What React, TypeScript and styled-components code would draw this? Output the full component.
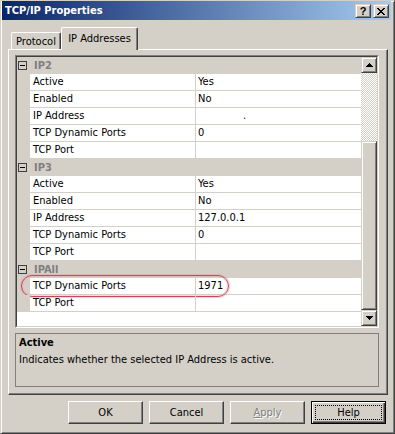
import React from "react";
import styled, { createGlobalStyle, css } from "styled-components";

const Global = createGlobalStyle`
  html, body { margin: 0; padding: 0; background: #D4D0C8; }
  body {
    font-family: "DejaVu Sans Condensed", "Liberation Sans", Arial, sans-serif;
    font-size: 11px;
    color: #000;
  }
  * { box-sizing: border-box; }
`;

const raised = css`
  background: #D4D0C8;
  border: 1px solid;
  border-color: #D4D0C8 #404040 #404040 #D4D0C8;
  box-shadow: inset 1px 1px #fff, inset -1px -1px #808080;
`;

const Window = styled.div`
  width: 395px;
  height: 434px;
  display: flex;
  flex-direction: column;
  background: #D4D0C8;
  border: 1px solid;
  border-color: #D4D0C8 #404040 #404040 #D4D0C8;
  box-shadow: inset 1px 1px #fff, inset -1px -1px #808080;
  padding: 0 3px 3px 1px;
  overflow: hidden;
`;

const TitleBar = styled.div`
  height: 19px;
  display: flex;
  align-items: center;
  justify-content: space-between;
  padding: 0 2px 0 3px;
  background: linear-gradient(to right, #0A246A, #A6CAF0);
  color: #fff;
  font-weight: bold;
  font-size: 11px;
`;

const CaptionButtons = styled.div`
  display: flex;
  gap: 2px;
  padding-top: 1px;
`;

const CaptionButton = styled.div`
  ${raised};
  width: 16px;
  height: 14px;
  display: flex;
  align-items: center;
  justify-content: center;
  color: #000;
  font-family: "Liberation Sans", Arial, sans-serif;
  font-weight: bold;
  font-size: 11px;
  line-height: 12px;
`;

const TabStrip = styled.div`
  margin: 7px 0 0 9px;
  height: 22px;
  display: flex;
  align-items: flex-end;
`;

const Tab = styled.div<{ $active?: boolean }>`
  position: relative;
  z-index: 1;
  display: flex;
  align-items: center;
  justify-content: center;
  background: #D4D0C8;
  border-top: 1px solid #fff;
  border-left: 1px solid #fff;
  border-right: 1px solid #404040;
  box-shadow: inset -1px 0 #808080;
  border-radius: 2px 2px 0 0;
  ${(p) =>
    p.$active
      ? css`
          width: 77px;
          height: 23px;
          margin-bottom: -1px;
          padding-bottom: 2px;
        `
      : css`
          width: 50px;
          height: 17px;
        `}
`;

const Panel = styled.div`
  margin-left: 6px;
  width: 380px;
  height: 346px;
  display: flex;
  flex-direction: column;
  gap: 5px;
  border: 1px solid;
  border-color: #fff #404040 #404040 #fff;
  box-shadow: inset -1px -1px #808080;
  padding: 5px 8px 7px 6px;
`;

const GridFrame = styled.div`
  height: 273px;
  border: 1px solid;
  border-color: #808080 #fff #fff #808080;
`;

const GridInner = styled.div`
  height: 100%;
  display: flex;
  border: 1px solid;
  border-color: #404040 #D4D0C8 #D4D0C8 #404040;
`;

const RowsArea = styled.div`
  flex: 1;
  background: #fff;
  overflow: hidden;
  display: flex;
  flex-direction: column;
`;

const CategoryRow = styled.div`
  height: 17px;
  display: grid;
  grid-template-columns: 13px 1fr;
  align-items: center;
  background: #D4D0C8;
  color: #808080;
  font-weight: bold;
`;

const CategoryName = styled.span`
  padding-left: 4px;
  line-height: 16px;
`;

const Expander = styled.div`
  display: flex;
  padding-left: 1px;
  padding-bottom: 1px;
`;

const PropRow = styled.div`
  position: relative;
  height: 17px;
  display: grid;
  grid-template-columns: 13px 166px 1fr;
`;

const Margin = styled.div`
  background: #D4D0C8;
`;

const NameCell = styled.div`
  border-right: 1px solid #D4D0C8;
  border-bottom: 1px solid #D4D0C8;
  padding-left: 3px;
  line-height: 16px;
  white-space: nowrap;
`;

const ValueCell = styled.div<{ $indent?: number }>`
  border-bottom: 1px solid #D4D0C8;
  padding-left: ${(p) => 2 + (p.$indent ?? 0)}px;
  line-height: 16px;
  white-space: nowrap;
`;

const Annotation = styled.div`
  position: absolute;
  left: 4px;
  top: -3px;
  width: 208px;
  height: 22px;
  border: 1.5px solid #C44A5C;
  border-radius: 11px;
  box-shadow: 0 0 1px 1px rgba(235, 160, 170, 0.55),
    inset 0 0 1px 1px rgba(235, 160, 170, 0.45);
  pointer-events: none;
`;

const Scrollbar = styled.div`
  width: 16px;
  display: flex;
  flex-direction: column;
`;

const ArrowButton = styled.div`
  ${raised};
  height: 16px;
  display: flex;
  align-items: center;
  justify-content: center;
`;

const Track = styled.div<{ $size: number }>`
  height: ${(p) => p.$size}px;
  background: repeating-conic-gradient(#D4D0C8 0% 25%, #fff 0% 50%) 0 0 / 2px 2px;
`;

const Thumb = styled.div<{ $size: number }>`
  ${raised};
  height: ${(p) => p.$size}px;
`;

const Description = styled.div`
  height: 54px;
  border: 1px solid #808080;
  padding: 2px 3px;
`;

const DescTitle = styled.div`
  font-weight: bold;
  line-height: 13px;
`;

const DescText = styled.div`
  margin-top: 4px;
  line-height: 13px;
`;

const ButtonRow = styled.div`
  margin-top: 6px;
  display: flex;
  justify-content: flex-end;
  gap: 6px;
  padding-right: 5px;
`;

const Button = styled.div<{ $focused?: boolean; $disabled?: boolean }>`
  width: 75px;
  height: 23px;
  display: flex;
  align-items: center;
  justify-content: center;
  background: #D4D0C8;
  ${(p) =>
    p.$focused
      ? css`
          border: 1px solid #000;
          box-shadow: inset 1px 1px #fff, inset -1px -1px #404040,
            inset -2px -2px #808080;
          padding: 3px;
        `
      : css`
          border: 1px solid;
          border-color: #fff #404040 #404040 #fff;
          box-shadow: inset -1px -1px #808080;
        `}
  ${(p) =>
    p.$disabled &&
    css`
      color: #808080;
      text-shadow: 1px 1px #fff;
    `}
`;

const FocusRing = styled.span`
  flex: 1;
  align-self: stretch;
  display: flex;
  align-items: center;
  justify-content: center;
  border: 1px dotted #000;
`;

const Filler = styled.div`
  flex: 1;
`;

const CloseGlyph = () => (
  <svg width="8" height="7" viewBox="0 0 8 7" shapeRendering="crispEdges">
    <path
      fill="#000"
      d="M0 0h2v1H0z M6 0h2v1H6z M1 1h2v1H1z M5 1h2v1H5z M2 2h4v1H2z M3 3h2v1H3z M2 4h4v1H2z M1 5h2v1H1z M5 5h2v1H5z M0 6h2v1H0z M6 6h2v1H6z"
    />
  </svg>
);

const Arrow = ({ up }: { up?: boolean }) => (
  <svg width="7" height="4" viewBox="0 0 7 4" shapeRendering="crispEdges">
    <path
      fill="#000"
      d={
        up
          ? "M3 0h1v1H3z M2 1h3v1H2z M1 2h5v1H1z M0 3h7v1H0z"
          : "M0 0h7v1H0z M1 1h5v1H1z M2 2h3v1H2z M3 3h1v1H3z"
      }
    />
  </svg>
);

const MinusBox = () => (
  <svg width="9" height="9" viewBox="0 0 9 9" shapeRendering="crispEdges">
    <rect x="0.5" y="0.5" width="8" height="8" fill="none" stroke="#404040" />
    <path d="M2 4h5v1H2z" fill="#000" />
  </svg>
);

type Item = { name: string; value: string; indent?: number; marked?: boolean };
type Section = { name: string; items: Item[] };

const sections: Section[] = [
  {
    name: "IP2",
    items: [
      { name: "Active", value: "Yes" },
      { name: "Enabled", value: "No" },
      { name: "IP Address", value: ".", indent: 45 },
      { name: "TCP Dynamic Ports", value: "0" },
      { name: "TCP Port", value: "" },
    ],
  },
  {
    name: "IP3",
    items: [
      { name: "Active", value: "Yes" },
      { name: "Enabled", value: "No" },
      { name: "IP Address", value: "127.0.0.1" },
      { name: "TCP Dynamic Ports", value: "0" },
      { name: "TCP Port", value: "" },
    ],
  },
  {
    name: "IPAll",
    items: [
      { name: "TCP Dynamic Ports", value: "1971", marked: true },
      { name: "TCP Port", value: "" },
    ],
  },
];

export default function App() {
  return (
    <>
      <Global />
      <Window>
        <TitleBar>
          <span>TCP/IP Properties</span>
          <CaptionButtons>
            <CaptionButton>?</CaptionButton>
            <CaptionButton>
              <CloseGlyph />
            </CaptionButton>
          </CaptionButtons>
        </TitleBar>

        <TabStrip>
          <Tab>Protocol</Tab>
          <Tab $active>IP Addresses</Tab>
        </TabStrip>

        <Panel>
          <GridFrame>
            <GridInner>
              <RowsArea>
                {sections.map((s) => (
                  <React.Fragment key={s.name}>
                    <CategoryRow>
                      <Expander>
                        <MinusBox />
                      </Expander>
                      <CategoryName>{s.name}</CategoryName>
                    </CategoryRow>
                    {s.items.map((it, i) => (
                      <PropRow key={s.name + i}>
                        <Margin />
                        <NameCell>{it.name}</NameCell>
                        <ValueCell $indent={it.indent}>{it.value}</ValueCell>
                        {it.marked && <Annotation />}
                      </PropRow>
                    ))}
                  </React.Fragment>
                ))}
              </RowsArea>
              <Scrollbar>
                <ArrowButton>
                  <Arrow up />
                </ArrowButton>
                <Track $size={68} />
                <Thumb $size={169} />
                <ArrowButton>
                  <Arrow />
                </ArrowButton>
              </Scrollbar>
            </GridInner>
          </GridFrame>
          <Description>
            <DescTitle>Active</DescTitle>
            <DescText>Indicates whether the selected IP Address is active.</DescText>
          </Description>
        </Panel>

        <ButtonRow>
          <Button>OK</Button>
          <Button>Cancel</Button>
          <Button $disabled>
            <span>
              <u>A</u>pply
            </span>
          </Button>
          <Button $focused>
            <FocusRing>Help</FocusRing>
          </Button>
        </ButtonRow>
        <Filler />
      </Window>
    </>
  );
}
